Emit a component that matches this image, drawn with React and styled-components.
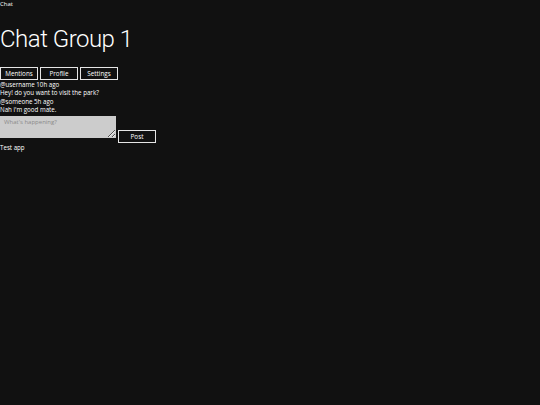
import React from "react";
import styled, { createGlobalStyle } from "styled-components";

const Global = createGlobalStyle`
  html, body { margin: 0; padding: 0; background: #111111; }
  body { font-family: "Open Sans", "Noto Sans", sans-serif; color: #ffffff; }
  #root { min-height: 405px; }
`;

const Page = styled.div`
  display: flex;
  flex-direction: column;
  align-items: flex-start;
  min-height: 405px;
  background: #111111;
`;

const AppLabel = styled.div`
  font-size: 6px;
  line-height: 8px;
`;

const Title = styled.h1`
  margin: 14px 0 11px 0;
  font-family: "Roboto", "Open Sans", sans-serif;
  font-size: 24px;
  line-height: 34px;
  font-weight: 300;
  letter-spacing: -0.5px;
`;

const Nav = styled.nav`
  display: flex;
  gap: 2px;
`;

const NavButton = styled.button`
  width: 38px;
  height: 13px;
  padding: 0;
  background: #111111;
  border: 1px solid #e6e6e6;
  color: #ffffff;
  font-family: inherit;
  font-size: 6.3px;
  line-height: 11px;
`;

const Messages = styled.div`
  display: flex;
  flex-direction: column;
  margin-top: 1px;
`;

const Line = styled.div`
  font-size: 6.2px;
  line-height: 8.3px;
  white-space: nowrap;
`;

const Composer = styled.div`
  display: flex;
  align-items: flex-end;
  gap: 2px;
  margin-top: 2px;
`;

const Input = styled.textarea`
  box-sizing: border-box;
  width: 116px;
  height: 22px;
  margin: 0;
  padding: 2px 4px;
  background: #cccccc;
  border: none;
  font-family: inherit;
  font-size: 6px;
  color: #333;
  resize: both;
  &::placeholder { color: #8a8a8a; }
`;

const PostButton = styled(NavButton)`
  margin-bottom: -5px;
`;

const Footer = styled.div`
  margin-top: 6px;
  font-size: 6.2px;
  line-height: 8px;
`;

export default function App() {
  return (
    <>
      <Global />
      <Page>
        <AppLabel>Chat</AppLabel>
        <Title>Chat Group 1</Title>
        <Nav>
          <NavButton>Mentions</NavButton>
          <NavButton>Profile</NavButton>
          <NavButton>Settings</NavButton>
        </Nav>
        <Messages>
          <Line>@username 10h ago</Line>
          <Line>Hey! do you want to visit the park?</Line>
          <Line>@someone 5h ago</Line>
          <Line>Nah i'm good mate.</Line>
        </Messages>
        <Composer>
          <Input placeholder="What's happening?" />
          <PostButton>Post</PostButton>
        </Composer>
        <Footer>Test app</Footer>
      </Page>
    </>
  );
}
